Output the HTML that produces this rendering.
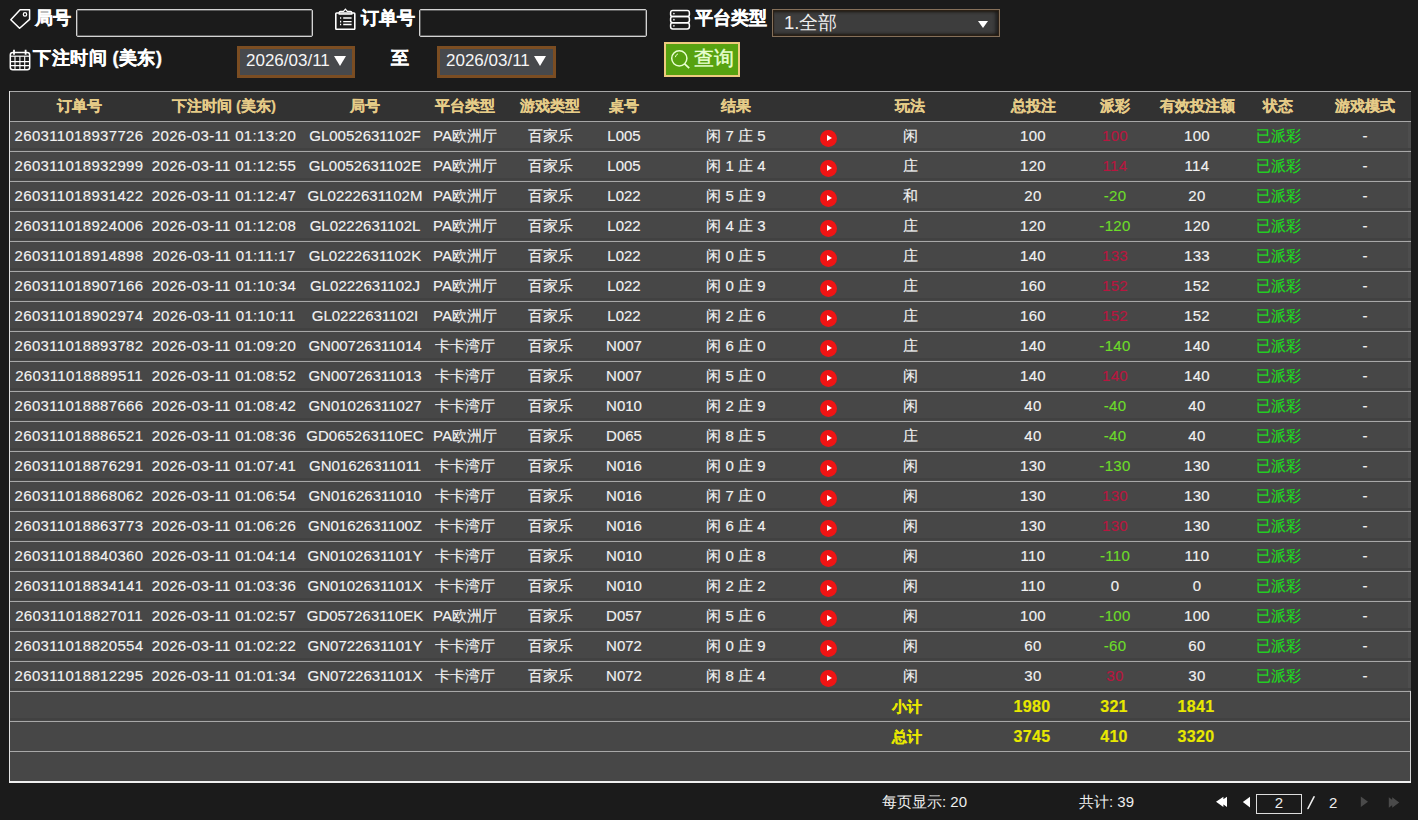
<!DOCTYPE html>
<html><head><meta charset="utf-8">
<style>
*{box-sizing:border-box}
html,body{margin:0;padding:0}
body{width:1418px;height:820px;overflow:hidden;background:#1b1b1b;position:relative;font-family:"Liberation Sans",sans-serif;color:#f0f0f0}
.abs{position:absolute}
.lbl{position:absolute;font-weight:bold;font-size:18px;color:#fff;line-height:20px;white-space:nowrap;-webkit-text-stroke:0.35px #fff}
.inp{position:absolute;border:1px solid #d4d4d4;box-shadow:inset 0 0 0 1px rgba(190,190,190,0.4);border-radius:2px;background:#1b1b1b}
.date{position:absolute;border:3px solid #7b4d22;background:#47494c;color:#eee;font-size:16.5px;line-height:26px;white-space:nowrap}
.dt{position:absolute;left:6px;top:-1px;font-size:17px;color:#f6f6f6}
.tri{position:absolute;top:7px;border-top:10px solid #fff;border-left:6px solid transparent;border-right:6px solid transparent}
.btn{position:absolute;border:2px solid #eecb7e;background:#57a210;color:#e8ffd0;font-size:20px;line-height:31px;white-space:nowrap}
.sel{position:absolute;border:1px solid #85705a;background:#3d3d3d;box-shadow:inset 0 0 0 1px #2a2016,inset 0 3px 3px -1px #1c160f,inset 0 -3px 3px -1px #1c160f,inset -6px 0 3px -2px #252525;color:#eee;font-size:17px;line-height:26px;white-space:nowrap}
.tbl{position:absolute;left:9px;top:91px;width:1402px;height:692px;background:#474747}
.thead{position:absolute;left:9px;top:91px;width:1402px;height:30px;background:#323232}
.hl{position:absolute;left:9px;width:1402px;height:1px;background:#a8a8a8}
.dk{position:absolute;left:9px;width:1402px;height:2px;background:#414141}
.vl{position:absolute;width:1px}
.c{position:absolute;width:200px;text-align:center;font-size:15px;line-height:30px;height:30px;white-space:nowrap;color:#f2f2f2}
.h{color:#e6cc88;font-weight:bold}
.c i{font-style:normal;font-size:15px;letter-spacing:0.32px}
.h i,.n i{font-size:15px;letter-spacing:0}
.red{color:#b8163f}
.dash{margin-top:0}
.c{-webkit-text-stroke:0.15px currentColor}
.grn{color:#6cdc2a}
.st{color:#1ede1e}
.yel{color:#e8e800;font-weight:bold}
.yel i{font-size:16px}
.play{position:absolute;width:17.2px;height:17.2px;border-radius:50%;background:#f01414}
.play:after{content:"";position:absolute;left:6.6px;top:5.8px;border-left:5.4px solid #fff;border-top:3.5px solid transparent;border-bottom:3.5px solid transparent}
.pg{position:absolute;font-size:15px;color:#eee;line-height:20px;white-space:nowrap}
</style></head><body>
<!-- toolbar row 1 -->
<svg class="abs" style="left:9px;top:8px" width="22" height="22" viewBox="0 0 22 22" fill="none" stroke="#fff" stroke-width="1.5">
<path d="M11.1 1.7 L20.6 1.7 L20.6 11.4 L10.6 20.3 L1.8 11.7 Z" stroke-linejoin="round"/><circle cx="16" cy="6.4" r="1.7" stroke-width="1.2"/></svg>
<div class="lbl" style="left:35px;top:8px">局号</div>
<div class="inp" style="left:76px;top:9px;width:237px;height:28px"></div>
<svg class="abs" style="left:334px;top:8px" width="22" height="22" viewBox="0 0 22 22" fill="none" stroke="#fff" stroke-width="1.6">
<rect x="1.8" y="5" width="19" height="16.4" rx="0.8"/><path d="M5.2 6.2 L5.2 4.5 Q5.2 3.4 6.4 3.4 L9.5 3.4 L11.4 1.2 L13.3 3.4 L16.6 3.4 Q17.8 3.4 17.8 4.5 L17.8 6.2 Z" stroke-width="1.3"/><path d="M9.2 10h8.4M9.2 13.6h8.4M9.2 16.5h8.4" stroke-width="1.3"/><path d="M6 10h1.2M6 13.6h1.2M6 16.5h1.2" stroke-width="1.6"/></svg>
<div class="lbl" style="left:361px;top:8px">订单号</div>
<div class="inp" style="left:419px;top:9px;width:228px;height:28px"></div>
<svg class="abs" style="left:669px;top:9px" width="22" height="22" viewBox="0 0 22 22" fill="none" stroke="#fff" stroke-width="1.5">
<rect x="1.6" y="1.6" width="18.8" height="6" rx="2.2"/><rect x="1.6" y="7.6" width="18.8" height="6.1" rx="2.2"/><rect x="1.6" y="13.7" width="18.8" height="6.3" rx="2.2"/>
<circle cx="4.9" cy="4.6" r="0.9" fill="#ddd" stroke="none"/><circle cx="4.9" cy="10.7" r="0.9" fill="#ddd" stroke="none"/><circle cx="4.9" cy="16.8" r="0.9" fill="#ddd" stroke="none"/></svg>
<div class="lbl" style="left:695px;top:8px">平台类型</div>
<div class="sel" style="left:772px;top:9px;width:228px;height:28px"><span style="position:absolute;left:11px;top:-0.5px;font-size:18.5px">1.全部</span>
<span style="position:absolute;left:205px;top:11px;border-top:7px solid #fff;border-left:5.5px solid transparent;border-right:5.5px solid transparent"></span></div>
<!-- toolbar row 2 -->
<svg class="abs" style="left:9px;top:49px" width="22" height="22" viewBox="0 0 22 22" fill="none" stroke="#fff" stroke-width="1.5">
<rect x="1.3" y="3.4" width="19.4" height="17.4" rx="2.5"/><path d="M1.3 7.2h19.4" stroke-width="1.2"/><path d="M5 0.8v5M16.6 0.8v5" stroke-width="1.8"/><path d="M1.5 12.6h19M1.5 16.6h19M6 7.2v13.5M10.9 7.2v13.5M15.7 7.2v13.5" stroke-width="1.1"/></svg>
<div class="lbl" style="left:33px;top:48px;letter-spacing:0.5px">下注时间 (美东)</div>
<div class="date" style="left:237px;top:46px;width:118px;height:32px"><span class="dt">2026/03/11</span><span class="tri" style="left:94px"></span></div>
<div class="lbl" style="left:391px;top:48px">至</div>
<div class="date" style="left:437px;top:46px;width:119px;height:32px"><span class="dt">2026/03/11</span><span class="tri" style="left:94px"></span></div>
<div class="btn" style="left:664px;top:42px;width:76px;height:35px">
<svg class="abs" style="left:1.2px;top:1.5px" width="26" height="26" viewBox="0 0 26 26" fill="none" stroke="#e8ffd0" stroke-width="1.5"><circle cx="12.3" cy="12.3" r="7.6"/><path d="M17.6 17.8l4.6 4.4" stroke-width="1.8"/><path d="M8.3 11.2 A4.5 4.5 0 0 1 11 7.8" stroke-width="1"/></svg>
<span style="position:absolute;left:28px;top:-1px;-webkit-text-stroke:0.4px #e8ffd0;font-size:19.5px">查询</span></div>
<!-- table -->
<div class="tbl"></div>
<div class="thead"></div>
<div class="abs" style="left:1408px;top:121px;width:3px;height:570px;background:#4d4d4d"></div>
<div class="hl" style="top:91px"></div>
<div class="hl" style="top:121px"></div>
<div class="dk" style="top:148px"></div>
<div class="hl" style="top:151px"></div>
<div class="dk" style="top:178px"></div>
<div class="hl" style="top:181px"></div>
<div class="dk" style="top:208px"></div>
<div class="hl" style="top:211px"></div>
<div class="dk" style="top:238px"></div>
<div class="hl" style="top:241px"></div>
<div class="dk" style="top:268px"></div>
<div class="hl" style="top:271px"></div>
<div class="dk" style="top:298px"></div>
<div class="hl" style="top:301px"></div>
<div class="dk" style="top:328px"></div>
<div class="hl" style="top:331px"></div>
<div class="dk" style="top:358px"></div>
<div class="hl" style="top:361px"></div>
<div class="dk" style="top:388px"></div>
<div class="hl" style="top:391px"></div>
<div class="dk" style="top:418px"></div>
<div class="hl" style="top:421px"></div>
<div class="dk" style="top:448px"></div>
<div class="hl" style="top:451px"></div>
<div class="dk" style="top:478px"></div>
<div class="hl" style="top:481px"></div>
<div class="dk" style="top:508px"></div>
<div class="hl" style="top:511px"></div>
<div class="dk" style="top:538px"></div>
<div class="hl" style="top:541px"></div>
<div class="dk" style="top:568px"></div>
<div class="hl" style="top:571px"></div>
<div class="dk" style="top:598px"></div>
<div class="hl" style="top:601px"></div>
<div class="dk" style="top:628px"></div>
<div class="hl" style="top:631px"></div>
<div class="dk" style="top:658px"></div>
<div class="hl" style="top:661px"></div>
<div class="dk" style="top:688px"></div>
<div class="hl" style="top:691px"></div>
<div class="dk" style="top:718px"></div>
<div class="hl" style="top:721px"></div>
<div class="hl" style="top:751px"></div>
<div class="abs" style="left:9px;top:91px;width:1px;height:692px;background:#e4e4e4"></div>
<div class="abs" style="left:1410px;top:691px;width:1px;height:92px;background:#d0d0d0"></div>
<div class="abs" style="left:9px;top:781px;width:1402px;height:2px;background:#f0f0f0"></div>
<span class="c h" style="left:-21px;top:91px">订单号</span>
<span class="c h" style="left:124px;top:91px">下注时间 (美东)</span>
<span class="c h" style="left:265px;top:91px">局号</span>
<span class="c h" style="left:365px;top:91px">平台类型</span>
<span class="c h" style="left:450px;top:91px">游戏类型</span>
<span class="c h" style="left:524px;top:91px">桌号</span>
<span class="c h" style="left:636px;top:91px">结果</span>
<span class="c h" style="left:810px;top:91px">玩法</span>
<span class="c h" style="left:933px;top:91px">总投注</span>
<span class="c h" style="left:1015px;top:91px">派彩</span>
<span class="c h" style="left:1097px;top:91px">有效投注额</span>
<span class="c h" style="left:1178px;top:91px">状态</span>
<span class="c h" style="left:1265px;top:91px">游戏模式</span>
<span class="c " style="left:-21px;top:121px"><i>260311018937726</i></span>
<span class="c " style="left:124px;top:121px"><i>2026-03-11 01:13:20</i></span>
<span class="c n" style="left:265px;top:121px"><i>GL0052631102F</i></span>
<span class="c n" style="left:365px;top:121px"><i>PA</i>欧洲厅</span>
<span class="c n" style="left:450px;top:121px">百家乐</span>
<span class="c n" style="left:524px;top:121px"><i>L005</i></span>
<span class="c n" style="left:636px;top:121px">闲 <i>7</i> 庄 <i>5</i></span>
<span class="play" style="left:820px;top:129.5px"></span>
<span class="c n" style="left:810px;top:121px">闲</span>
<span class="c " style="left:933px;top:121px"><i>100</i></span>
<span class="c red" style="left:1015px;top:121px"><i>100</i></span>
<span class="c " style="left:1097px;top:121px"><i>100</i></span>
<span class="c st n" style="left:1178px;top:121px">已派彩</span>
<span class="c n dash" style="left:1265px;top:121px"><i>-</i></span>
<span class="c " style="left:-21px;top:151px"><i>260311018932999</i></span>
<span class="c " style="left:124px;top:151px"><i>2026-03-11 01:12:55</i></span>
<span class="c n" style="left:265px;top:151px"><i>GL0052631102E</i></span>
<span class="c n" style="left:365px;top:151px"><i>PA</i>欧洲厅</span>
<span class="c n" style="left:450px;top:151px">百家乐</span>
<span class="c n" style="left:524px;top:151px"><i>L005</i></span>
<span class="c n" style="left:636px;top:151px">闲 <i>1</i> 庄 <i>4</i></span>
<span class="play" style="left:820px;top:159.5px"></span>
<span class="c n" style="left:810px;top:151px">庄</span>
<span class="c " style="left:933px;top:151px"><i>120</i></span>
<span class="c red" style="left:1015px;top:151px"><i>114</i></span>
<span class="c " style="left:1097px;top:151px"><i>114</i></span>
<span class="c st n" style="left:1178px;top:151px">已派彩</span>
<span class="c n dash" style="left:1265px;top:151px"><i>-</i></span>
<span class="c " style="left:-21px;top:181px"><i>260311018931422</i></span>
<span class="c " style="left:124px;top:181px"><i>2026-03-11 01:12:47</i></span>
<span class="c n" style="left:265px;top:181px"><i>GL0222631102M</i></span>
<span class="c n" style="left:365px;top:181px"><i>PA</i>欧洲厅</span>
<span class="c n" style="left:450px;top:181px">百家乐</span>
<span class="c n" style="left:524px;top:181px"><i>L022</i></span>
<span class="c n" style="left:636px;top:181px">闲 <i>5</i> 庄 <i>9</i></span>
<span class="play" style="left:820px;top:189.5px"></span>
<span class="c n" style="left:810px;top:181px">和</span>
<span class="c " style="left:933px;top:181px"><i>20</i></span>
<span class="c grn" style="left:1015px;top:181px"><i>-20</i></span>
<span class="c " style="left:1097px;top:181px"><i>20</i></span>
<span class="c st n" style="left:1178px;top:181px">已派彩</span>
<span class="c n dash" style="left:1265px;top:181px"><i>-</i></span>
<span class="c " style="left:-21px;top:211px"><i>260311018924006</i></span>
<span class="c " style="left:124px;top:211px"><i>2026-03-11 01:12:08</i></span>
<span class="c n" style="left:265px;top:211px"><i>GL0222631102L</i></span>
<span class="c n" style="left:365px;top:211px"><i>PA</i>欧洲厅</span>
<span class="c n" style="left:450px;top:211px">百家乐</span>
<span class="c n" style="left:524px;top:211px"><i>L022</i></span>
<span class="c n" style="left:636px;top:211px">闲 <i>4</i> 庄 <i>3</i></span>
<span class="play" style="left:820px;top:219.5px"></span>
<span class="c n" style="left:810px;top:211px">庄</span>
<span class="c " style="left:933px;top:211px"><i>120</i></span>
<span class="c grn" style="left:1015px;top:211px"><i>-120</i></span>
<span class="c " style="left:1097px;top:211px"><i>120</i></span>
<span class="c st n" style="left:1178px;top:211px">已派彩</span>
<span class="c n dash" style="left:1265px;top:211px"><i>-</i></span>
<span class="c " style="left:-21px;top:241px"><i>260311018914898</i></span>
<span class="c " style="left:124px;top:241px"><i>2026-03-11 01:11:17</i></span>
<span class="c n" style="left:265px;top:241px"><i>GL0222631102K</i></span>
<span class="c n" style="left:365px;top:241px"><i>PA</i>欧洲厅</span>
<span class="c n" style="left:450px;top:241px">百家乐</span>
<span class="c n" style="left:524px;top:241px"><i>L022</i></span>
<span class="c n" style="left:636px;top:241px">闲 <i>0</i> 庄 <i>5</i></span>
<span class="play" style="left:820px;top:249.5px"></span>
<span class="c n" style="left:810px;top:241px">庄</span>
<span class="c " style="left:933px;top:241px"><i>140</i></span>
<span class="c red" style="left:1015px;top:241px"><i>133</i></span>
<span class="c " style="left:1097px;top:241px"><i>133</i></span>
<span class="c st n" style="left:1178px;top:241px">已派彩</span>
<span class="c n dash" style="left:1265px;top:241px"><i>-</i></span>
<span class="c " style="left:-21px;top:271px"><i>260311018907166</i></span>
<span class="c " style="left:124px;top:271px"><i>2026-03-11 01:10:34</i></span>
<span class="c n" style="left:265px;top:271px"><i>GL0222631102J</i></span>
<span class="c n" style="left:365px;top:271px"><i>PA</i>欧洲厅</span>
<span class="c n" style="left:450px;top:271px">百家乐</span>
<span class="c n" style="left:524px;top:271px"><i>L022</i></span>
<span class="c n" style="left:636px;top:271px">闲 <i>0</i> 庄 <i>9</i></span>
<span class="play" style="left:820px;top:279.5px"></span>
<span class="c n" style="left:810px;top:271px">庄</span>
<span class="c " style="left:933px;top:271px"><i>160</i></span>
<span class="c red" style="left:1015px;top:271px"><i>152</i></span>
<span class="c " style="left:1097px;top:271px"><i>152</i></span>
<span class="c st n" style="left:1178px;top:271px">已派彩</span>
<span class="c n dash" style="left:1265px;top:271px"><i>-</i></span>
<span class="c " style="left:-21px;top:301px"><i>260311018902974</i></span>
<span class="c " style="left:124px;top:301px"><i>2026-03-11 01:10:11</i></span>
<span class="c n" style="left:265px;top:301px"><i>GL0222631102I</i></span>
<span class="c n" style="left:365px;top:301px"><i>PA</i>欧洲厅</span>
<span class="c n" style="left:450px;top:301px">百家乐</span>
<span class="c n" style="left:524px;top:301px"><i>L022</i></span>
<span class="c n" style="left:636px;top:301px">闲 <i>2</i> 庄 <i>6</i></span>
<span class="play" style="left:820px;top:309.5px"></span>
<span class="c n" style="left:810px;top:301px">庄</span>
<span class="c " style="left:933px;top:301px"><i>160</i></span>
<span class="c red" style="left:1015px;top:301px"><i>152</i></span>
<span class="c " style="left:1097px;top:301px"><i>152</i></span>
<span class="c st n" style="left:1178px;top:301px">已派彩</span>
<span class="c n dash" style="left:1265px;top:301px"><i>-</i></span>
<span class="c " style="left:-21px;top:331px"><i>260311018893782</i></span>
<span class="c " style="left:124px;top:331px"><i>2026-03-11 01:09:20</i></span>
<span class="c n" style="left:265px;top:331px"><i>GN00726311014</i></span>
<span class="c n" style="left:365px;top:331px">卡卡湾厅</span>
<span class="c n" style="left:450px;top:331px">百家乐</span>
<span class="c n" style="left:524px;top:331px"><i>N007</i></span>
<span class="c n" style="left:636px;top:331px">闲 <i>6</i> 庄 <i>0</i></span>
<span class="play" style="left:820px;top:339.5px"></span>
<span class="c n" style="left:810px;top:331px">庄</span>
<span class="c " style="left:933px;top:331px"><i>140</i></span>
<span class="c grn" style="left:1015px;top:331px"><i>-140</i></span>
<span class="c " style="left:1097px;top:331px"><i>140</i></span>
<span class="c st n" style="left:1178px;top:331px">已派彩</span>
<span class="c n dash" style="left:1265px;top:331px"><i>-</i></span>
<span class="c " style="left:-21px;top:361px"><i>260311018889511</i></span>
<span class="c " style="left:124px;top:361px"><i>2026-03-11 01:08:52</i></span>
<span class="c n" style="left:265px;top:361px"><i>GN00726311013</i></span>
<span class="c n" style="left:365px;top:361px">卡卡湾厅</span>
<span class="c n" style="left:450px;top:361px">百家乐</span>
<span class="c n" style="left:524px;top:361px"><i>N007</i></span>
<span class="c n" style="left:636px;top:361px">闲 <i>5</i> 庄 <i>0</i></span>
<span class="play" style="left:820px;top:369.5px"></span>
<span class="c n" style="left:810px;top:361px">闲</span>
<span class="c " style="left:933px;top:361px"><i>140</i></span>
<span class="c red" style="left:1015px;top:361px"><i>140</i></span>
<span class="c " style="left:1097px;top:361px"><i>140</i></span>
<span class="c st n" style="left:1178px;top:361px">已派彩</span>
<span class="c n dash" style="left:1265px;top:361px"><i>-</i></span>
<span class="c " style="left:-21px;top:391px"><i>260311018887666</i></span>
<span class="c " style="left:124px;top:391px"><i>2026-03-11 01:08:42</i></span>
<span class="c n" style="left:265px;top:391px"><i>GN01026311027</i></span>
<span class="c n" style="left:365px;top:391px">卡卡湾厅</span>
<span class="c n" style="left:450px;top:391px">百家乐</span>
<span class="c n" style="left:524px;top:391px"><i>N010</i></span>
<span class="c n" style="left:636px;top:391px">闲 <i>2</i> 庄 <i>9</i></span>
<span class="play" style="left:820px;top:399.5px"></span>
<span class="c n" style="left:810px;top:391px">闲</span>
<span class="c " style="left:933px;top:391px"><i>40</i></span>
<span class="c grn" style="left:1015px;top:391px"><i>-40</i></span>
<span class="c " style="left:1097px;top:391px"><i>40</i></span>
<span class="c st n" style="left:1178px;top:391px">已派彩</span>
<span class="c n dash" style="left:1265px;top:391px"><i>-</i></span>
<span class="c " style="left:-21px;top:421px"><i>260311018886521</i></span>
<span class="c " style="left:124px;top:421px"><i>2026-03-11 01:08:36</i></span>
<span class="c n" style="left:265px;top:421px"><i>GD065263110EC</i></span>
<span class="c n" style="left:365px;top:421px"><i>PA</i>欧洲厅</span>
<span class="c n" style="left:450px;top:421px">百家乐</span>
<span class="c n" style="left:524px;top:421px"><i>D065</i></span>
<span class="c n" style="left:636px;top:421px">闲 <i>8</i> 庄 <i>5</i></span>
<span class="play" style="left:820px;top:429.5px"></span>
<span class="c n" style="left:810px;top:421px">庄</span>
<span class="c " style="left:933px;top:421px"><i>40</i></span>
<span class="c grn" style="left:1015px;top:421px"><i>-40</i></span>
<span class="c " style="left:1097px;top:421px"><i>40</i></span>
<span class="c st n" style="left:1178px;top:421px">已派彩</span>
<span class="c n dash" style="left:1265px;top:421px"><i>-</i></span>
<span class="c " style="left:-21px;top:451px"><i>260311018876291</i></span>
<span class="c " style="left:124px;top:451px"><i>2026-03-11 01:07:41</i></span>
<span class="c n" style="left:265px;top:451px"><i>GN01626311011</i></span>
<span class="c n" style="left:365px;top:451px">卡卡湾厅</span>
<span class="c n" style="left:450px;top:451px">百家乐</span>
<span class="c n" style="left:524px;top:451px"><i>N016</i></span>
<span class="c n" style="left:636px;top:451px">闲 <i>0</i> 庄 <i>9</i></span>
<span class="play" style="left:820px;top:459.5px"></span>
<span class="c n" style="left:810px;top:451px">闲</span>
<span class="c " style="left:933px;top:451px"><i>130</i></span>
<span class="c grn" style="left:1015px;top:451px"><i>-130</i></span>
<span class="c " style="left:1097px;top:451px"><i>130</i></span>
<span class="c st n" style="left:1178px;top:451px">已派彩</span>
<span class="c n dash" style="left:1265px;top:451px"><i>-</i></span>
<span class="c " style="left:-21px;top:481px"><i>260311018868062</i></span>
<span class="c " style="left:124px;top:481px"><i>2026-03-11 01:06:54</i></span>
<span class="c n" style="left:265px;top:481px"><i>GN01626311010</i></span>
<span class="c n" style="left:365px;top:481px">卡卡湾厅</span>
<span class="c n" style="left:450px;top:481px">百家乐</span>
<span class="c n" style="left:524px;top:481px"><i>N016</i></span>
<span class="c n" style="left:636px;top:481px">闲 <i>7</i> 庄 <i>0</i></span>
<span class="play" style="left:820px;top:489.5px"></span>
<span class="c n" style="left:810px;top:481px">闲</span>
<span class="c " style="left:933px;top:481px"><i>130</i></span>
<span class="c red" style="left:1015px;top:481px"><i>130</i></span>
<span class="c " style="left:1097px;top:481px"><i>130</i></span>
<span class="c st n" style="left:1178px;top:481px">已派彩</span>
<span class="c n dash" style="left:1265px;top:481px"><i>-</i></span>
<span class="c " style="left:-21px;top:511px"><i>260311018863773</i></span>
<span class="c " style="left:124px;top:511px"><i>2026-03-11 01:06:26</i></span>
<span class="c n" style="left:265px;top:511px"><i>GN0162631100Z</i></span>
<span class="c n" style="left:365px;top:511px">卡卡湾厅</span>
<span class="c n" style="left:450px;top:511px">百家乐</span>
<span class="c n" style="left:524px;top:511px"><i>N016</i></span>
<span class="c n" style="left:636px;top:511px">闲 <i>6</i> 庄 <i>4</i></span>
<span class="play" style="left:820px;top:519.5px"></span>
<span class="c n" style="left:810px;top:511px">闲</span>
<span class="c " style="left:933px;top:511px"><i>130</i></span>
<span class="c red" style="left:1015px;top:511px"><i>130</i></span>
<span class="c " style="left:1097px;top:511px"><i>130</i></span>
<span class="c st n" style="left:1178px;top:511px">已派彩</span>
<span class="c n dash" style="left:1265px;top:511px"><i>-</i></span>
<span class="c " style="left:-21px;top:541px"><i>260311018840360</i></span>
<span class="c " style="left:124px;top:541px"><i>2026-03-11 01:04:14</i></span>
<span class="c n" style="left:265px;top:541px"><i>GN0102631101Y</i></span>
<span class="c n" style="left:365px;top:541px">卡卡湾厅</span>
<span class="c n" style="left:450px;top:541px">百家乐</span>
<span class="c n" style="left:524px;top:541px"><i>N010</i></span>
<span class="c n" style="left:636px;top:541px">闲 <i>0</i> 庄 <i>8</i></span>
<span class="play" style="left:820px;top:549.5px"></span>
<span class="c n" style="left:810px;top:541px">闲</span>
<span class="c " style="left:933px;top:541px"><i>110</i></span>
<span class="c grn" style="left:1015px;top:541px"><i>-110</i></span>
<span class="c " style="left:1097px;top:541px"><i>110</i></span>
<span class="c st n" style="left:1178px;top:541px">已派彩</span>
<span class="c n dash" style="left:1265px;top:541px"><i>-</i></span>
<span class="c " style="left:-21px;top:571px"><i>260311018834141</i></span>
<span class="c " style="left:124px;top:571px"><i>2026-03-11 01:03:36</i></span>
<span class="c n" style="left:265px;top:571px"><i>GN0102631101X</i></span>
<span class="c n" style="left:365px;top:571px">卡卡湾厅</span>
<span class="c n" style="left:450px;top:571px">百家乐</span>
<span class="c n" style="left:524px;top:571px"><i>N010</i></span>
<span class="c n" style="left:636px;top:571px">闲 <i>2</i> 庄 <i>2</i></span>
<span class="play" style="left:820px;top:579.5px"></span>
<span class="c n" style="left:810px;top:571px">闲</span>
<span class="c " style="left:933px;top:571px"><i>110</i></span>
<span class="c " style="left:1015px;top:571px"><i>0</i></span>
<span class="c " style="left:1097px;top:571px"><i>0</i></span>
<span class="c st n" style="left:1178px;top:571px">已派彩</span>
<span class="c n dash" style="left:1265px;top:571px"><i>-</i></span>
<span class="c " style="left:-21px;top:601px"><i>260311018827011</i></span>
<span class="c " style="left:124px;top:601px"><i>2026-03-11 01:02:57</i></span>
<span class="c n" style="left:265px;top:601px"><i>GD057263110EK</i></span>
<span class="c n" style="left:365px;top:601px"><i>PA</i>欧洲厅</span>
<span class="c n" style="left:450px;top:601px">百家乐</span>
<span class="c n" style="left:524px;top:601px"><i>D057</i></span>
<span class="c n" style="left:636px;top:601px">闲 <i>5</i> 庄 <i>6</i></span>
<span class="play" style="left:820px;top:609.5px"></span>
<span class="c n" style="left:810px;top:601px">闲</span>
<span class="c " style="left:933px;top:601px"><i>100</i></span>
<span class="c grn" style="left:1015px;top:601px"><i>-100</i></span>
<span class="c " style="left:1097px;top:601px"><i>100</i></span>
<span class="c st n" style="left:1178px;top:601px">已派彩</span>
<span class="c n dash" style="left:1265px;top:601px"><i>-</i></span>
<span class="c " style="left:-21px;top:631px"><i>260311018820554</i></span>
<span class="c " style="left:124px;top:631px"><i>2026-03-11 01:02:22</i></span>
<span class="c n" style="left:265px;top:631px"><i>GN0722631101Y</i></span>
<span class="c n" style="left:365px;top:631px">卡卡湾厅</span>
<span class="c n" style="left:450px;top:631px">百家乐</span>
<span class="c n" style="left:524px;top:631px"><i>N072</i></span>
<span class="c n" style="left:636px;top:631px">闲 <i>0</i> 庄 <i>9</i></span>
<span class="play" style="left:820px;top:639.5px"></span>
<span class="c n" style="left:810px;top:631px">闲</span>
<span class="c " style="left:933px;top:631px"><i>60</i></span>
<span class="c grn" style="left:1015px;top:631px"><i>-60</i></span>
<span class="c " style="left:1097px;top:631px"><i>60</i></span>
<span class="c st n" style="left:1178px;top:631px">已派彩</span>
<span class="c n dash" style="left:1265px;top:631px"><i>-</i></span>
<span class="c " style="left:-21px;top:661px"><i>260311018812295</i></span>
<span class="c " style="left:124px;top:661px"><i>2026-03-11 01:01:34</i></span>
<span class="c n" style="left:265px;top:661px"><i>GN0722631101X</i></span>
<span class="c n" style="left:365px;top:661px">卡卡湾厅</span>
<span class="c n" style="left:450px;top:661px">百家乐</span>
<span class="c n" style="left:524px;top:661px"><i>N072</i></span>
<span class="c n" style="left:636px;top:661px">闲 <i>8</i> 庄 <i>4</i></span>
<span class="play" style="left:820px;top:669.5px"></span>
<span class="c n" style="left:810px;top:661px">闲</span>
<span class="c " style="left:933px;top:661px"><i>30</i></span>
<span class="c red" style="left:1015px;top:661px"><i>30</i></span>
<span class="c " style="left:1097px;top:661px"><i>30</i></span>
<span class="c st n" style="left:1178px;top:661px">已派彩</span>
<span class="c n dash" style="left:1265px;top:661px"><i>-</i></span>
<span class="c yel" style="left:807px;top:691.5px">小计</span>
<span class="c yel" style="left:932px;top:692px"><i>1980</i></span>
<span class="c yel" style="left:1014px;top:692px"><i>321</i></span>
<span class="c yel" style="left:1096px;top:692px"><i>1841</i></span>
<span class="c yel" style="left:807px;top:721.5px">总计</span>
<span class="c yel" style="left:932px;top:722px"><i>3745</i></span>
<span class="c yel" style="left:1014px;top:722px"><i>410</i></span>
<span class="c yel" style="left:1096px;top:722px"><i>3320</i></span>
<!-- pagination -->
<div class="pg" style="left:882px;top:792px">每页显示: 20</div>
<div class="pg" style="left:1079px;top:792px">共计: 39</div>
<svg class="abs" style="left:1215px;top:796px" width="14" height="12" viewBox="0 0 14 12" fill="#fff"><path d="M1 5.7 L8.4 0.8 L8.4 10.9Z M4.6 5.7 L12 0.8 L12 10.9Z"/></svg>
<svg class="abs" style="left:1242px;top:796px" width="9" height="12" viewBox="0 0 9 12" fill="#fff"><path d="M0.8 6 L8 0.8 L8 11.6Z"/></svg>
<div class="abs" style="left:1256px;top:794px;width:46px;height:20px;border:1px solid #ddd;color:#eee;font-size:15px;line-height:15px;text-align:center">2</div>
<svg class="abs" style="left:1305px;top:795px" width="12" height="16" viewBox="0 0 12 16"><path d="M3 13.5 L9 1.8" stroke="#eee" stroke-width="1.6" stroke-linecap="round"/></svg>
<div class="pg" style="left:1329px;top:793px;font-size:15px">2</div>
<svg class="abs" style="left:1360px;top:796px" width="9" height="12" viewBox="0 0 9 12" fill="#4a4a4a"><path d="M0.8 0.4 L8 5.8 L0.8 11Z"/></svg>
<svg class="abs" style="left:1388px;top:796px" width="14" height="13" viewBox="0 0 14 13" fill="#4a4a4a"><path d="M0.8 1.2 L7.6 6.5 L0.8 11.8Z M4.2 1.2 L11.2 6.5 L4.2 11.8Z"/></svg>
</body></html>
